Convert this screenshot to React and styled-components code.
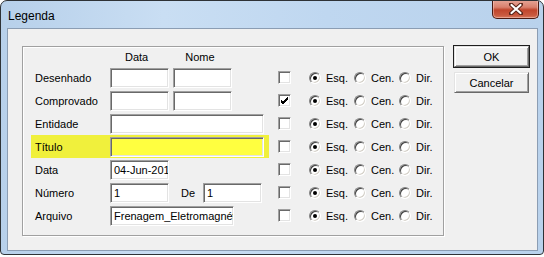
import React from 'react'
import styled, { createGlobalStyle } from 'styled-components'

const GlobalStyle = createGlobalStyle`
  html, body {
    margin: 0;
    padding: 0;
    background: #ffffff;
  }
  body {
    font-family: "Liberation Sans", Arial, sans-serif;
    font-size: 11px;
    color: #000;
  }
`

const Window = styled.div`
  box-sizing: border-box;
  width: 544px;
  height: 255px;
  border: 1px solid #2e3236;
  border-radius: 7px 7px 4px 4px;
  background:
    linear-gradient(to right, #b7d0ea 0%, #c9def3 30%, #bfd7f0 60%, #b9d2ec 100%);
  display: flex;
  flex-direction: column;
  padding: 0 5px 3px 6px;
  overflow: hidden;
`

const TitleBar = styled.div`
  height: 27px;
  display: flex;
  justify-content: space-between;
  align-items: flex-start;
`

const Title = styled.span`
  font-family: "Liberation Sans", Arial, sans-serif;
  font-size: 12px;
  line-height: 12px;
  margin: 9px 0 0 1px;
  color: #000;
`

const CloseButton = styled.div`
  box-sizing: border-box;
  width: 47px;
  height: 19px;
  margin-top: -1px;
  margin-right: -1px;
  border: 1px solid #4a1a12;
  border-top: none;
  border-radius: 0 0 5px 5px;
  background: linear-gradient(#e6a698 0%, #d9806d 40%, #c0452c 55%, #c95a40 85%, #d87a5e 100%);
  box-shadow: inset 0 0 0 1px rgba(255, 220, 210, 0.45);
  display: flex;
  align-items: center;
  justify-content: center;
`

const Client = styled.div`
  flex: 1;
  border: 1px solid #8b9db3;
  background: #f0f0f0;
  display: flex;
  align-items: flex-start;
  padding: 17px 0 0 14px;
`

const GroupBox = styled.div`
  box-sizing: border-box;
  width: 422px;
  height: 190px;
  border: 1px solid #a0a0a0;
  box-shadow: inset 1px 1px 0 #ffffff, 1px 1px 0 #ffffff;
  padding: 4px 0 0 12px;
  display: flex;
  flex-direction: column;
  gap: 2px;
`

const HeaderRow = styled.div`
  height: 14px;
  line-height: 13px;
  display: flex;
  gap: 37px;
  padding-left: 90px;
`

const Row = styled.div`
  height: 21px;
  display: grid;
  grid-template-columns: 243px 13px auto;
  align-items: center;
`

const Main = styled.div`
  display: flex;
  align-items: center;
  justify-self: start;
  height: ${p => (p.$highlight ? '23px' : '21px')};
  ${p =>
    p.$highlight &&
    `
    background: #f0f03c;
    margin: -1px -5px -1px -4px;
    padding: 0 5px 0 4px;
  `}
`

const Label = styled.span`
  width: ${p => p.$width || 75}px;
  padding-left: ${p => p.$indent || 0}px;
  box-sizing: border-box;
  flex-shrink: 0;
  white-space: nowrap;
`

const Field = styled.div`
  box-sizing: border-box;
  width: ${p => p.$width}px;
  height: 20px;
  margin-right: ${p => p.$gap || 0}px;
  flex-shrink: 0;
  background: ${p => (p.$yellow ? '#ffff40' : '#ffffff')};
  border: 1px solid;
  border-color: #a0a0a0 #ffffff #ffffff #a0a0a0;
  box-shadow: inset 1px 1px 0 #696969, inset -1px -1px 0 #e3e3e3;
  padding: 0 2px 0 3px;
  line-height: 18px;
  white-space: nowrap;
  overflow: hidden;
`

const CheckBox = styled.div`
  box-sizing: border-box;
  width: 13px;
  height: 13px;
  background: #ffffff;
  border: 1px solid;
  border-color: #a0a0a0 #ffffff #ffffff #a0a0a0;
  box-shadow: inset 1px 1px 0 #696969, inset -1px -1px 0 #e3e3e3;
  display: flex;
  align-items: center;
  justify-content: center;
`

const RadioGroup = styled.div`
  display: flex;
  margin-left: 18px;
`

const RadioItem = styled.label`
  width: 45px;
  display: flex;
  align-items: center;
  gap: 5px;
`

const RadioDot = styled.span`
  box-sizing: border-box;
  width: 12px;
  height: 12px;
  border-radius: 50%;
  background: #ffffff;
  border: 1px solid;
  border-color: #808080 #ffffff #ffffff #808080;
  box-shadow: inset 1px 1px 0 #404040, inset -1px -1px 0 #d4d0c8;
  display: flex;
  align-items: center;
  justify-content: center;
  &::after {
    content: '';
    width: 4px;
    height: 4px;
    border-radius: 50%;
    background: ${p => (p.$on ? '#000' : 'transparent')};
  }
`

const ButtonColumn = styled.div`
  display: flex;
  flex-direction: column;
  gap: 5px;
  margin-left: 10px;
`

const Button = styled.div`
  box-sizing: border-box;
  width: 75px;
  height: 21px;
  background: #f0f0f0;
  border: 1px solid;
  border-color: #e3e3e3 #696969 #696969 #e3e3e3;
  box-shadow: inset 1px 1px 0 #ffffff, inset -1px -1px 0 #a0a0a0;
  outline: ${p => (p.$default ? '1px solid #1e1e1e' : 'none')};
  display: flex;
  align-items: center;
  justify-content: center;
  font-size: 11px;
`

const Radios = () => (
  <RadioGroup>
    <RadioItem><RadioDot $on />Esq.</RadioItem>
    <RadioItem><RadioDot />Cen.</RadioItem>
    <RadioItem><RadioDot />Dir.</RadioItem>
  </RadioGroup>
)

const Check = ({ checked }) => (
  <CheckBox>
    {checked && (
      <svg width="9" height="9" viewBox="0 0 9 9">
        <path d="M1 4 L3 6 L8 1 M1 5 L3 7 L8 2 M1 6 L3 8 L8 3" stroke="#000" strokeWidth="1" fill="none" />
      </svg>
    )}
  </CheckBox>
)

const rows = [
  { label: 'Desenhado', fields: [{ w: 59, gap: 4 }, { w: 59 }] },
  { label: 'Comprovado', fields: [{ w: 59, gap: 4 }, { w: 59 }], checked: true },
  { label: 'Entidade', fields: [{ w: 154 }] },
  { label: 'Título', fields: [{ w: 154 }], highlight: true },
  { label: 'Data', fields: [{ w: 59, text: '04-Jun-2012' }] },
  { label: 'Número', fields: [{ w: 59, text: '1' }], de: '1' },
  { label: 'Arquivo', fields: [{ w: 124, text: 'Frenagem_Eletromagnético' }] },
]

export default function App() {
  return (
    <>
      <GlobalStyle />
      <Window>
        <TitleBar>
          <Title>Legenda</Title>
          <CloseButton>
            <svg width="14" height="12" viewBox="0 0 14 12">
              <path d="M2 1.5 L12 10.5 M12 1.5 L2 10.5" stroke="#5a2418" strokeWidth="4.2" strokeLinecap="round" />
              <path d="M2.5 2 L11.5 10 M11.5 2 L2.5 10" stroke="#ffffff" strokeWidth="2.2" strokeLinecap="round" />
            </svg>
          </CloseButton>
        </TitleBar>
        <Client>
          <GroupBox>
            <HeaderRow>
              <span>Data</span>
              <span>Nome</span>
            </HeaderRow>
            {rows.map(r => (
              <Row key={r.label}>
                <Main $highlight={r.highlight}>
                  <Label>{r.label}</Label>
                  {r.fields.map((f, i) => (
                    <Field key={i} $width={f.w} $gap={f.gap} $yellow={r.highlight}>
                      {f.text}
                    </Field>
                  ))}
                  {r.de && (
                    <>
                      <Label $width={34} $indent={12}>De</Label>
                      <Field $width={59}>{r.de}</Field>
                    </>
                  )}
                </Main>
                <Check checked={r.checked} />
                <Radios />
              </Row>
            ))}
          </GroupBox>
          <ButtonColumn>
            <Button $default>OK</Button>
            <Button>Cancelar</Button>
          </ButtonColumn>
        </Client>
      </Window>
    </>
  )
}
